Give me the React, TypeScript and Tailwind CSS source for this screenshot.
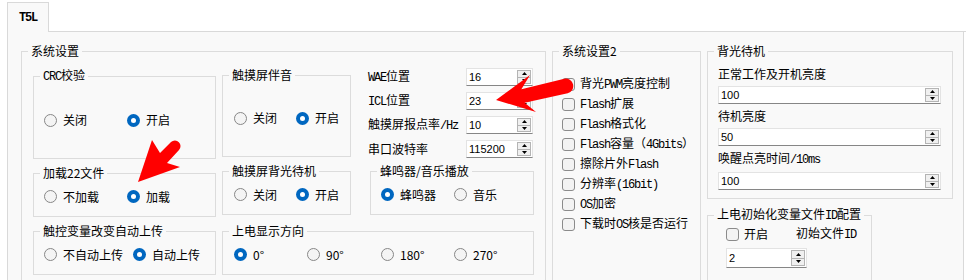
import type { ReactNode } from "react"

function M({ children }: { children: ReactNode }) {
  return <span className="font-['Liberation_Mono',monospace] text-[12px] tracking-[-1.2px]">{children}</span>
}

function Group({ title, className, children }: { title: ReactNode; className?: string; children?: ReactNode }) {
  return (
    <fieldset className={`min-w-0 shrink-0 border border-[#dcdcdc] ${className ?? ""}`}>
      <legend className="ml-[6px] whitespace-nowrap px-[3px] leading-[16px]">{title}</legend>
      {children}
    </fieldset>
  )
}

function Radio({ label, on, className }: { label: ReactNode; on?: boolean; className?: string }) {
  return (
    <div className={`flex shrink-0 items-center gap-[6px] ${className ?? ""}`}>
      {on ? (
        <span className="flex h-[13px] w-[13px] shrink-0 items-center justify-center rounded-full bg-[#0067c0]">
          <span className="h-[5px] w-[5px] rounded-full bg-white" />
        </span>
      ) : (
        <span className="h-[13px] w-[13px] shrink-0 rounded-full border border-[#878787] bg-[#f4f4f4]" />
      )}
      <span className="whitespace-nowrap">{label}</span>
    </div>
  )
}

function Check({ label, className }: { label: ReactNode; className?: string }) {
  return (
    <div className={`flex h-[20px] items-center gap-[5px] ${className ?? ""}`}>
      <span className="h-[13px] w-[13px] shrink-0 rounded-[3px] border border-[#8b8b8b] bg-[#f3f3f3]" />
      <span className="whitespace-nowrap">{label}</span>
    </div>
  )
}

function Spin({ value, className }: { value: string; className?: string }) {
  return (
    <div className={`flex shrink-0 border border-[#e3e3e3] border-b-[#868686] bg-white ${className ?? ""}`}>
      <span className="flex flex-1 items-center pl-[2px] font-['Liberation_Sans',sans-serif] text-[11px]">{value}</span>
      <span className="my-[1px] mr-[1px] flex w-[14px] flex-col border border-[#b4b4b4] bg-[#f0f0f0]">
        <span className="flex flex-1 items-center justify-center">
          <svg width="5" height="3" viewBox="0 0 5 3">
            <path d="M2.5 0L5 3H0z" fill="#000" />
          </svg>
        </span>
        <span className="flex flex-1 items-center justify-center border-t border-[#b4b4b4]">
          <svg width="5" height="3" viewBox="0 0 5 3">
            <path d="M0 0H5L2.5 3z" fill="#000" />
          </svg>
        </span>
      </span>
    </div>
  )
}

function SpinRow({ label, value }: { label: ReactNode; value: string }) {
  return (
    <div className="flex h-[24px] items-center justify-between">
      <span className="whitespace-nowrap">{label}</span>
      <Spin value={value} className="mr-[1px] h-[18px] w-[67px]" />
    </div>
  )
}

export default function App() {
  return (
    <div className="relative h-[280px] w-[966px] overflow-hidden bg-white text-[12px] leading-[16px] text-black font-['Noto_Sans_CJK_SC',sans-serif]">
      {/* tab strip */}
      <div className="flex h-[32px]">
        <div className="w-[7px]" />
        <div className="mt-[2px] flex w-[42px] items-center justify-center border border-b-0 border-[#d9d9d9] bg-[#f9f9f9] font-bold">
          <M>T5L</M>
        </div>
        <div className="flex-1 border-b border-[#d9d9d9]" />
      </div>

      <div className="ml-[7px] flex h-[248px] w-[957px] gap-[6px] border-x border-[#d9d9d9] bg-[#f9f9f9] pl-[13px] pt-[11px]">
        {/* 系统设置 */}
        <Group title="系统设置" className="h-[260px] w-[525px]">
          <div className="pl-[11px] pt-[8px]">
            <div className="flex gap-[6px]">
              <div className="flex w-[183px] flex-col gap-[6px]">
                <Group title={<><M>CRC</M>校验</>}>
                  <div className="flex h-[73px] items-center pb-[3px] pl-[10px]">
                    <Radio label="关闭" className="w-[83px]" />
                    <Radio label="开启" on />
                  </div>
                </Group>
                <Group title="加载22文件">
                  <div className="flex h-[35px] items-center pb-[4px] pl-[10px]">
                    <Radio label="不加载" className="w-[83px]" />
                    <Radio label="加载" on />
                  </div>
                </Group>
              </div>
              <div className="flex w-[129px] flex-col gap-[6px]">
                <Group title="触摸屏伴音">
                  <div className="flex h-[73px] items-center pb-[3px] pl-[11px]">
                    <Radio label="关闭" className="w-[62px]" />
                    <Radio label="开启" on />
                  </div>
                </Group>
                <Group title="触摸屏背光待机">
                  <div className="flex h-[35px] items-center pb-[4px] pl-[11px]">
                    <Radio label="关闭" className="w-[62px]" />
                    <Radio label="开启" on />
                  </div>
                </Group>
              </div>
              <div className="ml-[11px] flex w-[166px] flex-col">
                <div className="-mt-[2px] flex flex-col">
                  <SpinRow label={<><M>WAE</M>位置</>} value="16" />
                  <SpinRow label={<><M>ICL</M>位置</>} value="23" />
                  <SpinRow label={<>触摸屏报点率<M>/Hz</M></>} value="10" />
                  <SpinRow label="串口波特率" value="115200" />
                </div>
                <Group title="蜂鸣器/音乐播放" className="ml-[2px] mt-[2px] w-[164px]">
                  <div className="flex h-[35px] items-center pb-[4px] pl-[10px]">
                    <Radio label="蜂鸣器" on className="w-[73px]" />
                    <Radio label="音乐" />
                  </div>
                </Group>
              </div>
            </div>
            <div className="mt-[6px] flex gap-[6px]">
              <Group title="触控变量改变自动上传" className="w-[183px]">
                <div className="flex h-[35px] items-center pb-[4px] pl-[10px]">
                  <Radio label="不自动上传" className="w-[89px]" />
                  <Radio label="自动上传" on />
                </div>
              </Group>
              <Group title="上电显示方向" className="w-[312px]">
                <div className="flex h-[35px] items-center pb-[4px] pl-[11px]">
                  <Radio label="0°" on className="w-[73px]" />
                  <Radio label="90°" className="w-[74px]" />
                  <Radio label="180°" className="w-[73px]" />
                  <Radio label="270°" />
                </div>
              </Group>
            </div>
          </div>
        </Group>

        {/* 系统设置2 */}
        <Group title="系统设置2" className="h-[260px] w-[149px]">
          <div className="flex flex-col pl-[9px] pt-[15px]">
            <Check label={<>背光<M>PWM</M>亮度控制</>} />
            <Check label={<><M>Flash</M>扩展</>} />
            <Check label={<><M>Flash</M>格式化</>} />
            <Check label={<><M>Flash</M>容量（<M>4Gbits</M>）</>} />
            <Check label={<>擦除片外<M>Flash</M></>} />
            <Check label={<>分辨率<M>(16bit)</M></>} />
            <Check label={<><M>OS</M>加密</>} />
            <Check label={<>下载时<M>OS</M>核是否运行</>} />
          </div>
        </Group>

        {/* right column */}
        <div className="flex w-[246px] flex-col gap-[7px]">
          <Group title="背光待机">
            <div className="flex flex-col gap-[4px] pb-[8px] pl-[10px] pr-[11px] pt-[7px]">
              <div className="flex flex-col gap-[4px]">
                <span>正常工作及开机亮度</span>
                <Spin value="100" className="h-[18px]" />
              </div>
              <div className="flex flex-col gap-[4px]">
                <span>待机亮度</span>
                <Spin value="50" className="h-[18px]" />
              </div>
              <div className="flex flex-col gap-[4px]">
                <span>唤醒点亮时间<M>/10ms</M></span>
                <Spin value="100" className="h-[18px]" />
              </div>
            </div>
          </Group>
          <Group title={<>上电初始化变量文件<M>ID</M>配置</>} className="h-[80px] w-[165px]">
            <div className="flex flex-col pl-[18px] pt-[2px]">
              <div className="flex h-[16px] items-center">
                <Check label="开启" />
                <span className="ml-[28px] whitespace-nowrap">初始文件<M>ID</M></span>
              </div>
              <Spin value="2" className="mt-[6px] h-[20px] w-[81px]" />
            </div>
          </Group>
        </div>
      </div>

      {/* red annotation arrows */}
      <svg className="pointer-events-none absolute left-0 top-0" width="966" height="280" viewBox="0 0 966 280">
        <path d="M138 182L152 140L160 153L171 142A5.66 5.66 0 0 1 179 150L167 163L180 167Z" fill="#ff0000" />
        <path d="M496 100L530 75L521.4 89.2L564.3 78.7A7.5 7.5 0 0 1 567.7 93.3L524.6 102.8L536 112Z" fill="#ff0000" />
      </svg>
    </div>
  )
}
